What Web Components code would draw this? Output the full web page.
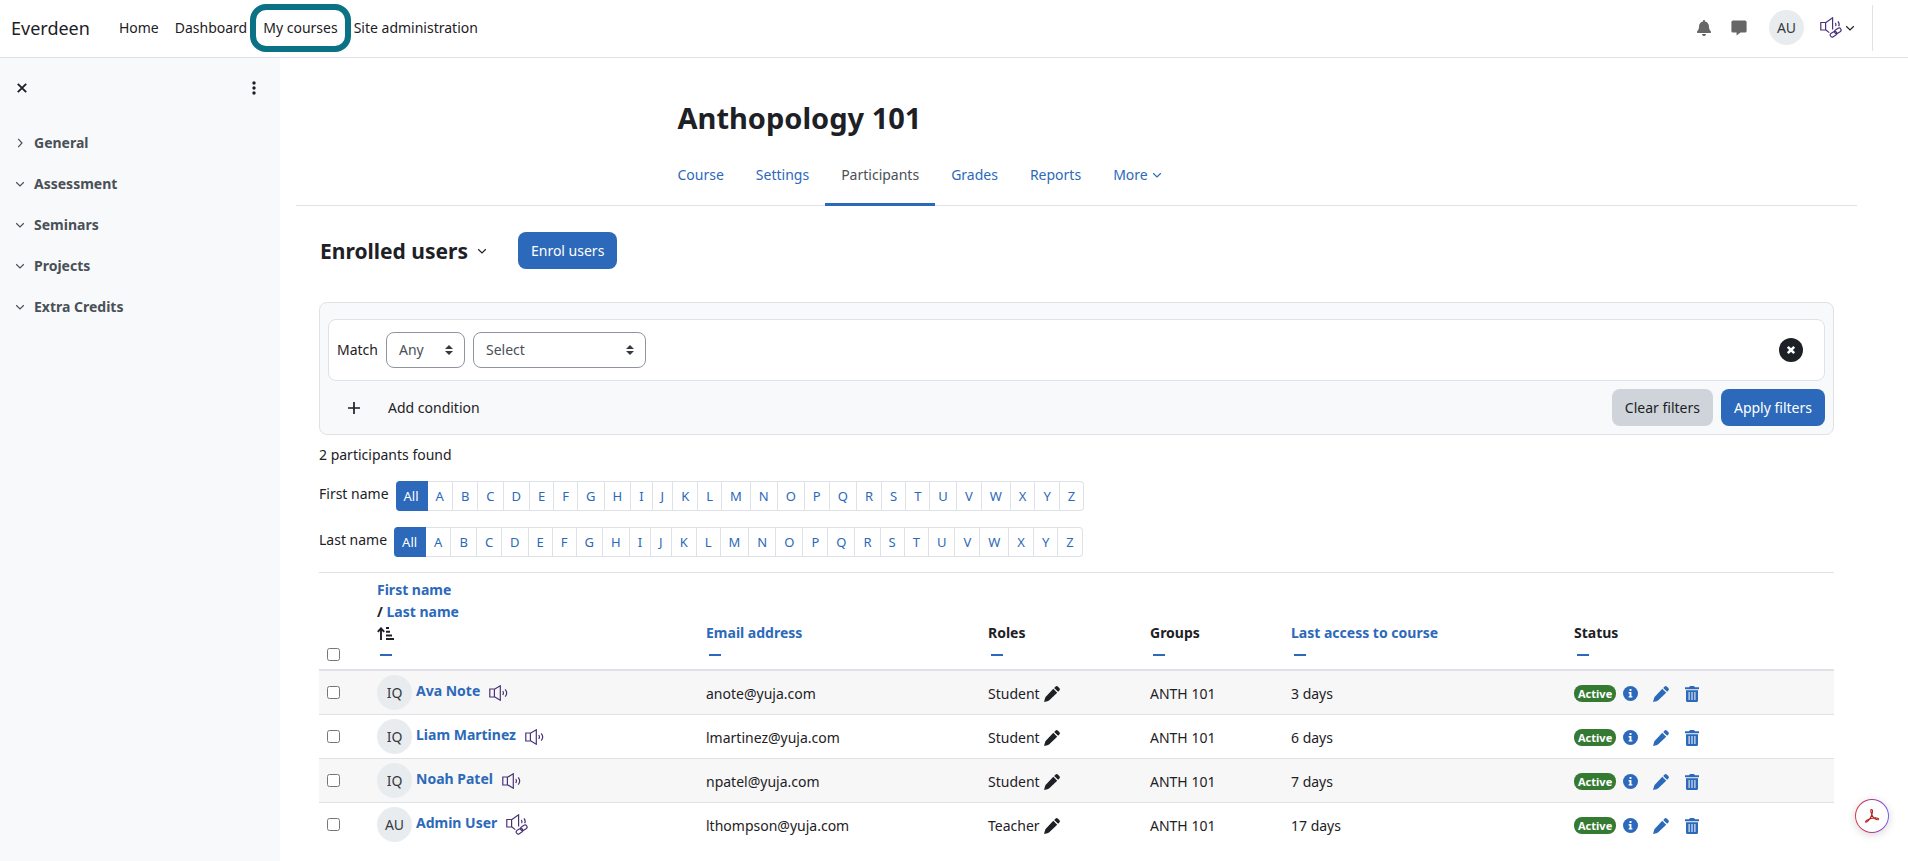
<!DOCTYPE html>
<html lang="en">
<head>
<meta charset="utf-8">
<title>Anthopology 101: Participants</title>
<style>
  :root {
    --blue: #2c69ba;
    --ink: #1d2125;
    --soft: #495057;
    --line: #dee2e6;
    --panel: #f8f9fa;
    --purple: #4b3277;
  }
  body {
    margin: 0;
    background: #fff;
    color: var(--ink);
    font: 14px/22px "Noto Sans", "Open Sans", sans-serif;
  }
</style>
</head>
<body>
<course-page>
  <nav-bar slot="top" brand="Everdeen"></nav-bar>
  <course-drawer slot="side">
    <drawer-item icon="right">General</drawer-item>
    <drawer-item icon="down">Assessment</drawer-item>
    <drawer-item icon="down">Seminars</drawer-item>
    <drawer-item icon="down">Projects</drawer-item>
    <drawer-item icon="down">Extra Credits</drawer-item>
  </course-drawer>
  <course-header>Anthopology 101</course-header>
  <enrolled-bar></enrolled-bar>
  <user-filter></user-filter>
  <initials-bars></initials-bars>
  <participants-table></participants-table>
  <pdf-button slot="float"></pdf-button>
</course-page>

<script>
const ICONS = {
  close: ['0 0 10 10', 10, 10, '<path d="M.8.8 9.200 9.200M9.200.8.8 9.200" stroke="currentColor" stroke-width="1.900" fill="none"/>'],
  dots: ['0 0 4 14', 4, 14, '<circle cx="2" cy="2" r="1.700"/><circle cx="2" cy="7" r="1.700"/><circle cx="2" cy="12" r="1.700"/>'],
  right: ['0 0 10 10', 10, 10, '<path d="M3.200.8 7 5 3.200 9.200" fill="none" stroke="currentColor" stroke-width="1.200"/>'],
  down: ['0 0 10 10', 10, 10, '<path d="M1.200 3.300 5 7 8.800 3.300" fill="none" stroke="currentColor" stroke-width="1.200"/>'],
  bell: ['0 0 448 512', 14, 16, '<path d="M224 0c-17.700 0-32 14.300-32 32v19.200C119 66 64 130.600 64 208v18.800c0 47-17.300 92.400-48.500 127.600l-7.400 8.300c-8.400 9.400-10.400 22.900-5.300 34.400S19.400 416 32 416h384c12.600 0 24-7.400 29.200-18.900s3.100-25-5.300-34.400l-7.400-8.300C401.300 319.200 384 273.900 384 226.800V208c0-77.400-55-142-128-156.800V32c0-17.700-14.300-32-32-32zm45.300 493.300c12-12 18.700-28.300 18.700-45.300H160c0 17 6.700 33.300 18.700 45.300S207 512 224 512s33.300-6.700 45.300-18.700z"/>'],
  chat: ['0 0 16 16', 16, 16, '<path d="M2 .5h12a1.600 1.600 0 0 1 1.600 1.600v8.800a1.600 1.600 0 0 1-1.600 1.600H9.500L5.600 15.600v-3.100H2A1.600 1.600 0 0 1 .4 10.900V2.100A1.600 1.600 0 0 1 2 .5z"/>'],
  plus: ['0 0 12 12', 12, 12, '<path d="M6 0v12M0 6h12" stroke="currentColor" stroke-width="1.700"/>'],
  updown: ['0 0 8 10', 8, 10, '<path d="M4 0 8 4H0zM4 10 0 6h8z"/>'],
  remove: ['0 0 24 24', 24, 24, '<circle cx="12" cy="12" r="12"/><path d="M8.800 8.800 15.200 15.200M15.200 8.800 8.800 15.200" stroke="#fff" stroke-width="2.600"/>'],
  sort: ['0 0 17 13', 17, 13, '<path d="M4 13V1.500M.8 4.800 4 1.300 7.200 4.800" fill="none" stroke="currentColor" stroke-width="1.900"/><path d="M9 0h3v2H9zM9 3.700h4v2H9zM9 7.400h6v2H9zM9 11h8v2H9z"/>'],
  minus: ['0 0 12 2', 12, 2, '<path d="M0 0h12v2H0z"/>'],
  pencil: ['0 0 16 16', 16, 16, '<path d="M9.300 2.800 13.200 6.700 5.300 14.300Q4.800 14.700 4.200 14.900L0 16 1.200 11.800Q1.400 11.200 1.800 10.700zM10.200 1.900 11.400.7Q12.700-.5 14 .7L15.300 2Q16.500 3.300 15.300 4.600L14.100 5.800z"/>'],
  trash: ['0 0 14 16', 14, 16, '<path d="M4.400.7Q4.700 0 5.400 0h3.200q.7 0 1 .7L10 1.200h4V3.200H0V1.200h4z"/><path fill-rule="evenodd" d="M1 4.300h12V14.500Q13 16 11.500 16h-9Q1 16 1 14.500zM3.600 6v8h1V6zM6.500 6v8h1V6zM9.400 6v8h1V6z"/>'],
  info: ['0 0 16 16', 15, 15, '<circle cx="8" cy="8" r="8"/><path d="M7 3.300h2v2H7zM6 6.500h3v4.300h1v1.500H6v-1.500h1V8H6z" fill="#fff"/>'],
  speaker: ['0 0 19 16', 19, 16, '<g fill="none" stroke="currentColor" stroke-width="1.200"><path d="M.8 4h4.600v8H.8zM5.400 4.300 11.300.8V15.200L5.400 11.700"/><path d="M13.700 6q1.500 2 0 4M16.200 4.300q3 3.700 0 7.400"/></g>'],
  speakerLink: ['0 0 22 21', 22, 21, '<g fill="none" stroke="currentColor" stroke-width="1.200"><path d="M.8 5.500h4.800v7.500H.8zM5.600 5.700 12.600.8V12.500M5.600 12.700 9.300 15.600"/><path d="M15.300 6q1.300 1.600.3 3.200M18 4.300q2 2.800.7 5"/><rect x="14.300" y="11.800" width="7" height="4" rx="2" transform="rotate(-32 17.800 13.800)"/><rect x="10" y="15.200" width="7" height="4" rx="2" transform="rotate(-32 13.500 17.200)"/></g>'],
  acrobat: ['0 0 16 16', 16, 16, '<path d="M7.300 1.600c1.500-.5 1.500 2.400.4 5.400C6.500 10.300 3.700 14.600 1.900 14.200.3 13.600 4.300 10.800 8 10.200c3.600-.6 6.800-.2 6.600 1-.3 1.400-3.400.2-5.200-1.800C7.500 7.300 6 2.200 7.300 1.600z" fill="none" stroke="#b5201f" stroke-width="1.100"/>']
};
const icon = (name) => {
  const [box, w, h, body] = ICONS[name];
  return `<svg viewBox="${box}" width="${w}" height="${h}" fill="currentColor" aria-hidden="true">${body}</svg>`;
};
const BASE = `<style>
  :host, * { box-sizing: border-box; }
  a { color: var(--blue); text-decoration: none; }
  button { font: inherit; color: inherit; border: 0; background: none; padding: 0; margin: 0; cursor: pointer; }
  svg { display: block; flex: none; }
  .btn { height: 37px; padding: 0 13px; border-radius: 8px; background: var(--blue); color: #fff; }
</style>`;
function define(name, render) {
  customElements.define(name, class extends HTMLElement {
    constructor() {
      super();
      this.attachShadow({ mode: 'open' });
    }
    connectedCallback() {
      this.shadowRoot.innerHTML = BASE + render(this);
    }
  });
}

define('course-page', () => `<style>
  :host { display: flex; flex-direction: column; min-height: 100vh; }
  .body { display: flex; flex: 1; }
  main { flex: 1; min-width: 0; padding: 0 51px 0 16px; }
</style>
<slot name="top"></slot>
<div class="body"><slot name="side"></slot><main><slot></slot></main></div>
<slot name="float"></slot>`);

define('user-avatar', () => `<style>
  :host { display: flex; flex: none; align-items: center; justify-content: center; width: 35px; height: 35px;
    border-radius: 50%; background: #e9ecef; color: #343a40; }
</style><slot></slot>`);

define('nav-bar', (el) => `<style>
  :host { display: flex; align-items: center; height: 58px; border-bottom: 1px solid var(--line); padding: 0 35px 2px 11px; }
  .brand { font-size: 18px; color: var(--ink); margin-right: 29px; }
  nav { display: flex; gap: 16px; flex: 1; }
  nav a { color: var(--ink); }
  .marked { position: relative; }
  .marked::after { content: ""; position: absolute; inset: -13px; border: 6px solid #0b7286; border-radius: 16px; }
  .tools { display: flex; align-items: center; height: 46px; padding-right: 17px; border-right: 1px solid var(--line); }
  .tools button { color: #666; display: flex; align-items: center; }
  .bell { margin-right: 20px; }
  .chat { margin-right: 22px; }
  .tools .menu { color: var(--ink); gap: 3px; margin-left: 16px; }
  .voice { color: var(--purple); }
</style>
<a class="brand" href="#">${el.getAttribute('brand')}</a>
<nav><a href="#">Home</a><a href="#">Dashboard</a><a class="marked" href="#">My courses</a><a href="#">Site administration</a></nav>
<div class="tools">
  <button class="bell" aria-label="Notifications">${icon('bell')}</button>
  <button class="chat" aria-label="Messages">${icon('chat')}</button>
  <user-avatar>AU</user-avatar>
  <button class="menu" aria-label="User menu"><span class="voice">${icon('speakerLink')}</span>${icon('down')}</button>
</div>`);

define('course-drawer', () => `<style>
  :host { display: block; flex: none; width: 280px; background: var(--panel); }
  header { display: flex; justify-content: space-between; align-items: center; height: 60px; padding: 0 24px 0 17px; margin-bottom: 4px; }
  header button { display: flex; }
</style>
<header><button aria-label="Close course index">${icon('close')}</button><button aria-label="Course index options">${icon('dots')}</button></header>
<slot></slot>`);

define('drawer-item', (el) => `<style>
  :host { display: block; color: var(--soft); }
  button { display: flex; align-items: center; gap: 9px; width: 100%; height: 41px; padding-left: 15px; font-weight: 700; }
</style>
<button>${icon(el.getAttribute('icon'))}<span><slot></slot></span></button>`);

define('course-header', () => `<style>
  :host { display: block; border-bottom: 1px solid var(--line); }
  .inner { max-width: 830px; margin: 0 auto; padding-top: 40px; }
  h1 { margin: 0 0 6px; padding: 0 16px; font-size: 29px; line-height: 40px; }
  nav { display: flex; }
  nav a { display: flex; align-items: center; gap: 4px; height: 62px; padding: 3px 16px 0; border-bottom: 3px solid transparent; margin-bottom: -1px; }
  nav .on { color: var(--soft); border-color: var(--blue); }
</style>
<div class="inner">
  <h1><slot></slot></h1>
  <nav><a href="#">Course</a><a href="#">Settings</a><a class="on" href="#" aria-current="page">Participants</a><a href="#">Grades</a><a href="#">Reports</a><a href="#">More ${icon('down')}</a></nav>
</div>`);

define('enrolled-bar', () => `<style>
  :host { display: flex; align-items: center; padding: 26px 24px 33px; }
  .view { display: flex; align-items: center; gap: 9px; margin-right: 31px; }
  h2 { margin: 0; font-size: 21px; line-height: 32px; }
</style>
<button class="view"><h2>Enrolled users</h2>${icon('down')}</button>
<button class="btn">Enrol users</button>`);

define('user-filter', () => `<style>
  :host { display: block; margin: 0 23px; padding: 16px 8px 8px; border: 1px solid var(--line); border-radius: 8px; background: var(--panel); }
  .row { display: flex; align-items: center; gap: 8px; height: 62px; padding: 0 21px 0 8px; border: 1px solid var(--line); border-radius: 8px; background: #fff; }
  .pick { display: grid; align-items: center; height: 36px; }
  .pick > * { grid-area: 1 / 1; }
  .pick svg { justify-self: end; margin-right: 12px; color: #343a40; pointer-events: none; }
  select { appearance: none; font: inherit; color: var(--soft); background: #fff; height: 36px; padding: 0 12px; border: 1px solid #8f959e; border-radius: 8px; }
  .any { width: 79px; }
  .kind { width: 173px; }
  .remove { margin-left: auto; }
  .foot { display: flex; align-items: center; gap: 8px; margin-top: 8px; }
  .add { display: flex; align-items: center; gap: 28px; padding-left: 20px; margin-right: auto; }
  .clear { background: #ced4da; color: var(--ink); }
</style>
<div class="row">
  <label for="match">Match</label>
  <span class="pick"><select id="match" class="any"><option>Any</option></select>${icon('updown')}</span>
  <span class="pick"><select class="kind" aria-label="Filter type"><option>Select</option></select>${icon('updown')}</span>
  <button class="remove" aria-label="Remove filter row">${icon('remove')}</button>
</div>
<div class="foot">
  <button class="add">${icon('plus')}Add condition</button>
  <button class="btn clear">Clear filters</button>
  <button class="btn">Apply filters</button>
</div>`);

define('initials-bars', () => `<style>
  :host { display: block; margin: 0 23px; padding: 9px 0 15px; }
  p { margin: 0 0 15px; }
  .bar { display: flex; gap: 7px; }
  .bar + .bar { margin-top: 16px; }
  .label { line-height: 26px; }
  ul { display: flex; list-style: none; margin: 0; padding: 0; font-size: 13px; line-height: 28px; }
  li { border: 1px solid var(--line); border-left: 0; }
  li a { display: block; padding: 0 8px; }
  li:first-child { border-color: var(--blue); background: var(--blue); border-radius: 4px 0 0 4px; }
  li:first-child a { color: #fff; }
  li:last-child { border-radius: 0 4px 4px 0; }
</style>
<p>2 participants found</p>
${['First name', 'Last name'].map((label) => `<div class="bar"><span class="label">${label}</span><ul>${
  ['All', ...'ABCDEFGHIJKLMNOPQRSTUVWXYZ'].map((c) => `<li><a href="#">${c}</a></li>`).join('')}</ul></div>`).join('')}`);

define('row-actions', () => `<style>
  :host { display: flex; align-items: center; }
  .badge { margin-right: 6px; padding: 0 4px; border-radius: 8px; background: #357a32; color: #fff; font-size: 11px; font-weight: 700; line-height: 17px; }
  a { display: flex; justify-content: center; width: 16px; margin-right: 15px; }
</style>
<span class="badge">Active</span>
<a href="#" aria-label="Enrolment details">${icon('info')}</a><a href="#" aria-label="Edit enrolment">${icon('pencil')}</a><a href="#" aria-label="Unenrol">${icon('trash')}</a>`);

const PEOPLE = [
  ['IQ', 'Ava Note', 'speaker', 'anote@yuja.com', 'Student', '3 days'],
  ['IQ', 'Liam Martinez', 'speaker', 'lmartinez@yuja.com', 'Student', '6 days'],
  ['IQ', 'Noah Patel', 'speaker', 'npatel@yuja.com', 'Student', '7 days'],
  ['AU', 'Admin User', 'speakerLink', 'lthompson@yuja.com', 'Teacher', '17 days']
];
const hide = (label) => `<a class="hide" href="#" aria-label="Hide ${label}">${icon('minus')}</a>`;
define('participants-table', () => `<style>
  :host { display: block; margin: 0 23px; }
  table { width: 100%; table-layout: fixed; border-collapse: separate; border-spacing: 0; }
  th { text-align: left; vertical-align: bottom; padding: 6px 8px 3px; border-top: 1px solid var(--line); border-bottom: 2px solid var(--line); }
  td { height: 44px; padding: 2px 8px 0; border-bottom: 1px solid var(--line); vertical-align: middle; }
  td:nth-child(-n+2) { padding-top: 0; }
  tbody tr:nth-child(odd) td { background: #f7f7f7; }
  tbody tr:last-child td { border-bottom-color: transparent; }
  .hide { display: flex; align-items: center; height: 22px; padding-left: 3px; }
  .sort { display: flex; align-items: center; height: 21px; }
  input { display: block; width: 13px; height: 13px; margin: 0; }
  th input { margin-bottom: 5px; }
  .user { display: flex; align-items: center; gap: 4px; font-weight: 700; }
  .user user-avatar { font-weight: 400; }
  .user a { padding-bottom: 3px; }
  .user span { color: var(--purple); margin-left: 5px; }
  .role { display: flex; align-items: center; gap: 4px; }
</style>
<table>
  <colgroup><col style="width:50px"><col style="width:329px"><col style="width:282px"><col style="width:162px"><col style="width:141px"><col style="width:283px"><col style="width:268px"></colgroup>
  <thead><tr>
    <th><input type="checkbox" aria-label="Select all"></th>
    <th><a href="#">First name</a><br>/ <a href="#">Last name</a><span class="sort">${icon('sort')}</span>${hide('name')}</th>
    <th><a href="#">Email address</a>${hide('email')}</th>
    <th>Roles${hide('roles')}</th>
    <th>Groups${hide('groups')}</th>
    <th><a href="#">Last access to course</a>${hide('last access')}</th>
    <th>Status${hide('status')}</th>
  </tr></thead>
  <tbody>${PEOPLE.map(([who, name, voice, mail, role, seen]) => `<tr>
    <td><input type="checkbox" aria-label="Select ${name}"></td>
    <td><div class="user"><user-avatar>${who}</user-avatar><a href="#">${name}</a><span>${icon(voice)}</span></div></td>
    <td>${mail}</td>
    <td><div class="role">${role}<button aria-label="Edit roles">${icon('pencil')}</button></div></td>
    <td>ANTH 101</td>
    <td>${seen}</td>
    <td><row-actions></row-actions></td>
  </tr>`).join('')}</tbody>
</table>`);

define('pdf-button', () => `<style>
  :host { position: fixed; right: 19px; bottom: 28px; }
  button { display: flex; align-items: center; justify-content: center; width: 34px; height: 34px; border: 1px solid transparent; border-radius: 50%;
    background: linear-gradient(#fff, #fff) padding-box, linear-gradient(90deg, #d7373f, #b0388f, #7a52f0) border-box; box-shadow: 0 2px 8px rgba(0, 0, 0, .16); }
</style>
<button aria-label="Open in PDF viewer">${icon('acrobat')}</button>`);
</script>
</body>
</html>
